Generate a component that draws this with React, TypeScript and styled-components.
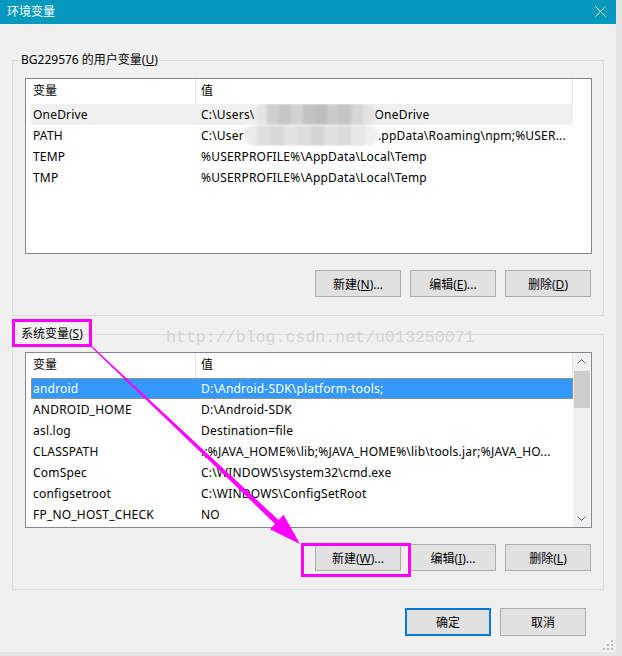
import React from "react";
import styled, { createGlobalStyle, css } from "styled-components";

const GlobalStyle = createGlobalStyle`
  html, body { margin: 0; padding: 0; background: #e4e4e4; }
  body {
    font-family: "Noto Sans", "Noto Sans CJK SC", sans-serif;
    font-size: 12px;
    color: #000;
  }
  * { box-sizing: border-box; }
`;

const Window = styled.div`
  position: relative;
  width: 616px;
  height: 652px;
  background: #f0f0f0;
  display: flex;
  flex-direction: column;
`;

const TitleBar = styled.div`
  height: 24px;
  background: #059abd;
  color: #fff;
  display: flex;
  align-items: center;
  justify-content: space-between;
  padding: 0 10px 2px 7px;
  font-size: 12px;
`;

const Body = styled.div`
  padding: 28px 12px 0 12px;
  display: flex;
  flex-direction: column;
`;

const Group = styled.fieldset<{ $top?: number }>`
  margin: ${(p) => p.$top ?? 0}px 0 0 0;
  padding: 0;
  border: 1px solid #dcdcdc;
  min-width: 0;
`;

const GroupLabel = styled.legend`
  margin-left: 6px;
  padding: 0 2px;
  font-size: 12px;
  line-height: 16px;
  height: 16px;
`;

const GroupBody = styled.div`
  padding: 10px 11px 18px 12px;
  display: flex;
  flex-direction: column;
`;

const ListBox = styled.div`
  height: 176px;
  border: 1px solid #828790;
  background: #fff;
  display: flex;
  overflow: hidden;
`;

const ListContent = styled.div`
  width: 547px;
  display: flex;
  flex-direction: column;
`;

const HeaderRow = styled.div`
  display: flex;
  height: 25px;
`;

const HeaderCell = styled.div<{ $w?: number; $pad: number }>`
  ${(p) => (p.$w ? css`width: ${p.$w}px;` : css`flex: 1;`)}
  padding-left: ${(p) => p.$pad}px;
  border-right: 1px solid #e5e5e5;
  line-height: 23px;
  white-space: nowrap;
`;

const Row = styled.div<{ $state?: "hover" | "selected" }>`
  display: flex;
  margin-left: 5px;
  width: 542px;
  height: 21px;
  line-height: 21px;
  white-space: nowrap;
  letter-spacing: 0.2px;
  ${(p) =>
    p.$state === "hover" &&
    css`
      background: #f0f0f0;
    `}
  ${(p) =>
    p.$state === "selected" &&
    css`
      background: #3399ff;
      color: #fff;
      outline: 1px dotted #e8872b;
      outline-offset: -1px;
    `}
`;

const NameCell = styled.div`
  width: 164px;
  padding-left: 2px;
  overflow: hidden;
`;

const ValueCell = styled.div`
  flex: 1;
  min-width: 0;
  padding-left: 6px;
  overflow: hidden;
`;

const Redact = styled.span<{ $w: number }>`
  vertical-align: top;
  width: ${(p) => p.$w}px;
  height: 21px;
  display: inline-flex;
  filter: blur(1.4px);
  border-radius: 9px;
  overflow: hidden;
`;

const Tile = styled.span<{ $c: string }>`
  flex: 1;
  height: 100%;
  background: ${(p) => p.$c};
`;

const Scrollbar = styled.div`
  width: 17px;
  background: #f0f0f0;
  display: flex;
  flex-direction: column;
`;

const ScrollArrow = styled.div`
  height: 17px;
  display: flex;
  align-items: center;
  justify-content: center;
`;

const Thumb = styled.div`
  height: 37px;
  margin: 1px 0 0 1px;
  background: #cdcdcd;
`;

const ScrollSpacer = styled.div`
  flex: 1;
`;

const ButtonRow = styled.div`
  display: flex;
  justify-content: flex-end;
  gap: 9px;
  margin-top: 16px;
  padding-right: 1px;
`;

const Btn = styled.button<{ $default?: boolean; $h?: number }>`
  width: 86px;
  height: ${(p) => p.$h ?? 27}px;
  padding: 0;
  margin: 0;
  background: #e1e1e1;
  border: 1px solid #adadad;
  font-family: inherit;
  font-size: 12px;
  color: #000;
  ${(p) =>
    p.$default &&
    css`
      border: 2px solid #0078d7;
    `}
`;

const Footer = styled.div`
  display: flex;
  justify-content: flex-end;
  gap: 9px;
  margin-top: 18px;
  padding-right: 30px;
`;

const Overlay = styled.div`
  position: absolute;
  left: 0;
  top: 0;
  width: 622px;
  height: 656px;
  pointer-events: none;
`;

const AnnoBox = styled.div<{ $x: number; $y: number; $w: number; $h: number }>`
  position: absolute;
  left: ${(p) => p.$x}px;
  top: ${(p) => p.$y}px;
  width: ${(p) => p.$w}px;
  height: ${(p) => p.$h}px;
  border: 3px solid #f0f;
`;

const Watermark = styled.div`
  position: absolute;
  left: 166px;
  top: 328px;
  font-family: "Liberation Mono", monospace;
  font-size: 16.6px;
  line-height: 20px;
  color: #d5d5d5;
  white-space: nowrap;
`;

const ArrowSvg = styled.svg`
  position: absolute;
  left: 0;
  top: 0;
`;

const Grip = styled.svg`
  position: absolute;
  right: 3px;
  bottom: 2px;
`;

const mosaicA = ["#e4e4e4", "#cfcfcf", "#c6c6c6", "#d2d2d2", "#c2c2c2", "#bdbdbd", "#cacaca", "#c4c4c4", "#d6d6d6", "#e2e2e2"];
const mosaicB = ["#ececec", "#dedede", "#d8d8d8", "#e2e2e2", "#dcdcdc", "#d4d4d4", "#e0e0e0", "#dadada", "#e6e6e6", "#efefef"];

const Mosaic: React.FC<{ w: number; colors: string[] }> = ({ w, colors }) => (
  <Redact $w={w}>
    {colors.map((c, i) => (
      <Tile key={i} $c={c} />
    ))}
  </Redact>
);

type RowData = { name: string; value: React.ReactNode; state?: "hover" | "selected" };

const userRows: RowData[] = [
  {
    name: "OneDrive",
    state: "hover",
    value: (
      <>
        C:\Users\
        <Mosaic w={120} colors={mosaicA} />
        OneDrive
      </>
    ),
  },
  {
    name: "PATH",
    value: (
      <>
        C:\User
        <Mosaic w={134} colors={mosaicB} />
        .ppData\Roaming\npm;%USER...
      </>
    ),
  },
  { name: "TEMP", value: "%USERPROFILE%\\AppData\\Local\\Temp" },
  { name: "TMP", value: "%USERPROFILE%\\AppData\\Local\\Temp" },
];

const sysRows: RowData[] = [
  { name: "android", value: "D:\\Android-SDK\\platform-tools;", state: "selected" },
  { name: "ANDROID_HOME", value: "D:\\Android-SDK" },
  { name: "asl.log", value: "Destination=file" },
  { name: "CLASSPATH", value: ".;%JAVA_HOME%\\lib;%JAVA_HOME%\\lib\\tools.jar;%JAVA_HO..." },
  { name: "ComSpec", value: "C:\\WINDOWS\\system32\\cmd.exe" },
  { name: "configsetroot", value: "C:\\WINDOWS\\ConfigSetRoot" },
  { name: "FP_NO_HOST_CHECK", value: "NO" },
];

const Chevron: React.FC<{ up?: boolean }> = ({ up }) => (
  <svg width="9" height="5" viewBox="0 0 9 5">
    <polyline
      points={up ? "0.5,4.5 4.5,0.5 8.5,4.5" : "0.5,0.5 4.5,4.5 8.5,0.5"}
      fill="none"
      stroke="#606060"
      strokeWidth="1"
    />
  </svg>
);

const VarList: React.FC<{ rows: RowData[]; scroll?: boolean }> = ({ rows, scroll }) => (
  <ListBox>
    <ListContent>
      <HeaderRow>
        <HeaderCell $w={170} $pad={7}>
          变量
        </HeaderCell>
        <HeaderCell $pad={5}>值</HeaderCell>
      </HeaderRow>
      {rows.map((r) => (
        <Row key={r.name} $state={r.state}>
          <NameCell>{r.name}</NameCell>
          <ValueCell>{r.value}</ValueCell>
        </Row>
      ))}
    </ListContent>
    {scroll && (
      <Scrollbar>
        <ScrollArrow>
          <Chevron up />
        </ScrollArrow>
        <Thumb />
        <ScrollSpacer />
        <ScrollArrow>
          <Chevron />
        </ScrollArrow>
      </Scrollbar>
    )}
  </ListBox>
);

// Annotation arrow geometry
const S = { x: 92, y: 347 };
const T = { x: 300, y: 544 };
const dx = T.x - S.x;
const dy = T.y - S.y;
const len = Math.hypot(dx, dy);
const d = { x: dx / len, y: dy / len };
const pp = { x: -d.y, y: d.x };
const B = { x: T.x - 32 * d.x, y: T.y - 32 * d.y };
const pt = (o: { x: number; y: number }, k: number) => `${(o.x + k * pp.x).toFixed(1)},${(o.y + k * pp.y).toFixed(1)}`;
const arrowPoints = [
  pt(S, -0.6),
  pt(B, -2.6),
  pt(B, -10),
  `${T.x},${T.y}`,
  pt(B, 10),
  pt(B, 2.6),
  pt(S, 0.6),
].join(" ");

export default function App() {
  return (
    <>
      <GlobalStyle />
      <Window>
        <TitleBar>
          <span>环境变量</span>
          <svg width="11" height="11" viewBox="0 0 11 11">
            <path d="M0.5 0.5 L10.5 10.5 M10.5 0.5 L0.5 10.5" stroke="#fff" strokeWidth="1" />
          </svg>
        </TitleBar>
        <Body>
          <Group>
            <GroupLabel>
              BG229576 的用户变量(<u>U</u>)
            </GroupLabel>
            <GroupBody>
              <VarList rows={userRows} />
              <ButtonRow>
                <Btn>
                  新建(<u>N</u>)...
                </Btn>
                <Btn>
                  编辑(<u>E</u>)...
                </Btn>
                <Btn>
                  删除(<u>D</u>)
                </Btn>
              </ButtonRow>
            </GroupBody>
          </Group>
          <Group $top={10}>
            <GroupLabel>
              系统变量(<u>S</u>)
            </GroupLabel>
            <GroupBody>
              <VarList rows={sysRows} scroll />
              <ButtonRow>
                <Btn>
                  新建(<u>W</u>)...
                </Btn>
                <Btn>
                  编辑(<u>I</u>)...
                </Btn>
                <Btn>
                  删除(<u>L</u>)
                </Btn>
              </ButtonRow>
            </GroupBody>
          </Group>
        </Body>
        <Footer>
          <Btn $default $h={28}>
            确定
          </Btn>
          <Btn $h={28}>取消</Btn>
        </Footer>
        <Grip width="10" height="10" viewBox="0 0 10 10">
          <rect x="8" y="0" width="2" height="2" fill="#bdbdbd" />
          <rect x="8" y="4" width="2" height="2" fill="#bdbdbd" />
          <rect x="4" y="4" width="2" height="2" fill="#bdbdbd" />
          <rect x="8" y="8" width="2" height="2" fill="#bdbdbd" />
          <rect x="4" y="8" width="2" height="2" fill="#bdbdbd" />
          <rect x="0" y="8" width="2" height="2" fill="#bdbdbd" />
        </Grip>
        <Overlay>
          <Watermark>http://blog.csdn.net/u013250071</Watermark>
          <AnnoBox $x={12} $y={319} $w={80} $h={28} />
          <AnnoBox $x={301} $y={543} $w={110} $h={34} />
          <ArrowSvg width="622" height="656" viewBox="0 0 622 656">
            <polygon points={arrowPoints} fill="#f0f" />
          </ArrowSvg>
        </Overlay>
      </Window>
    </>
  );
}
